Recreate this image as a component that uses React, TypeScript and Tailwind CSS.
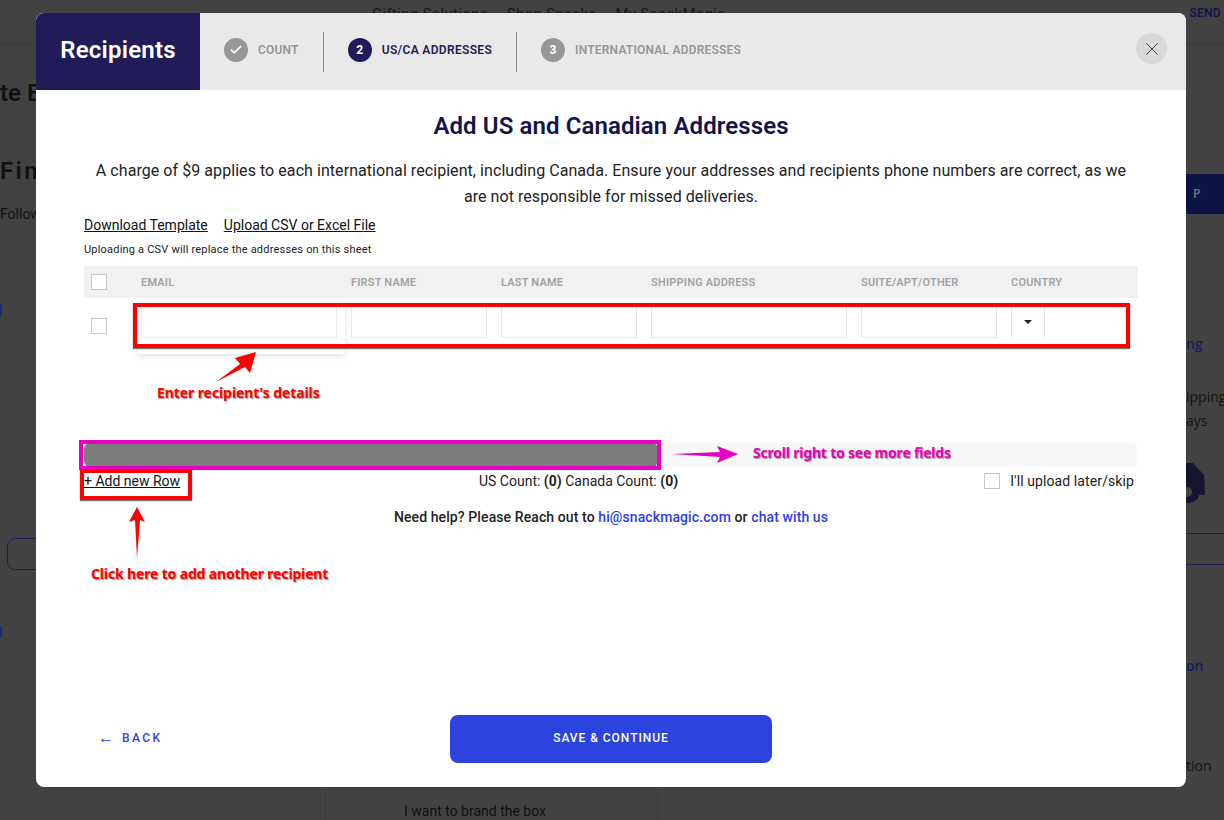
import React from 'react';
import { Check, X } from 'lucide-react';

const Box: React.FC<{ className?: string }> = ({ className = '' }) => (
  <span className={`block h-4 w-4 shrink-0 border border-[#c9c9c9] bg-white ${className}`} />
);

const columns = [
  { label: 'EMAIL', width: 'w-[196px]' },
  { label: 'FIRST NAME', width: 'w-[136px]' },
  { label: 'LAST NAME', width: 'w-[136px]' },
  { label: 'SHIPPING ADDRESS', width: 'w-[196px]' },
  { label: 'SUITE/APT/OTHER', width: 'w-[136px]' },
];

const Step: React.FC<{ mark: React.ReactNode; label: string; active?: boolean }> = ({ mark, label, active }) => (
  <div className="-mt-1 flex items-center gap-[10px]">
    <span
      className={`flex h-6 w-6 items-center justify-center rounded-full text-xs font-bold text-white ${
        active ? 'bg-[#211c57]' : 'bg-[#979797]'
      }`}
    >
      {mark}
    </span>
    <span
      className={`text-xs font-semibold ${
        active ? 'tracking-[0.33px] text-[#211c57]' : 'tracking-[0.2px] text-[#979797]'
      }`}
    >
      {label}
    </span>
  </div>
);

const App: React.FC = () => {
  return (
    <div className="relative h-[820px] w-[1224px] overflow-hidden bg-[#424242] font-['Roboto',sans-serif] text-[#111]">
      {/* Dimmed page behind the modal */}
      <div className="flex h-full flex-col">
        <div className="flex h-[45px] shrink-0 border-b border-[#3a3a3a] pl-[372px] pt-[3px] text-[15px] tracking-[0.3px] text-[#1b1b1b]">
          <span className="mr-[19px]">Gifting Solutions</span>
          <span className="mr-[19px]">Shop Snacks</span>
          <span>My SnackMagic ⌄</span>
          <span className="ml-auto pr-[3px] pt-[2px] text-xs font-semibold text-[#15154a]">SEND</span>
        </div>
        <div className="flex min-h-0 flex-1">
          <div className="w-9 shrink-0 overflow-hidden whitespace-nowrap text-[#111]">
            <div className="mt-[32px] text-2xl font-semibold">te E</div>
            <div className="mt-[46px] text-2xl font-semibold tracking-widest">Fin</div>
            <div className="mt-[17px] text-sm">Follow</div>
            <div className="-ml-[3px] mt-[80px] h-3 w-[5px] rounded-full bg-[#1d2a7a]" />
            <div className="ml-[7px] mt-[222px] h-8 w-10 rounded-l-lg border border-[#211c57]" />
            <div className="-ml-[3px] mt-[56px] h-3 w-[5px] rounded-full bg-[#1d2a7a]" />
          </div>
          <div className="flex flex-1 flex-col justify-end">
            <div className="ml-[286px] h-[33px] w-[341px] border-x border-[#484848] pl-[81px] pt-[14px] text-sm leading-5 text-[#111]">
              I want to brand the box
            </div>
          </div>
          <div className="w-[38px] shrink-0 overflow-hidden whitespace-nowrap font-['Open_Sans',sans-serif] text-sm text-[#141414]">
            <div className="mt-[129px] flex h-10 items-center bg-[#0c1446] pl-[7px] text-xs font-semibold text-[#777]">P</div>
            <div className="mt-[120px] text-sm font-semibold leading-5 text-[#16205f]">ng</div>
            <div className="mt-[33px] leading-5">ipping</div>
            <div className="mt-[4px] leading-5">ays</div>
            <svg className="mt-[30px] block" width="20" height="44" viewBox="0 0 20 44">
              <path d="M0 2 L7 2 L18 14 L19 34 L13 34 C12 40 5 43 0 42 L0 36 C3 36 6 34 6 31 C6 27 3 26 0 26 Z" fill="#15152e" />
            </svg>
            <div className="mt-[28px] h-[32px] border-y border-[#211c57]" />
            <div className="mt-[91px] text-sm font-semibold leading-5 text-[#16205f]">on</div>
            <div className="mt-[80px] leading-5">tion</div>
          </div>
        </div>
      </div>

      {/* Modal */}
      <div className="absolute left-9 top-[13px] flex h-[774px] w-[1150px] flex-col overflow-hidden rounded-lg bg-white">
        <div className="flex h-[77px] shrink-0 items-center bg-[#e9e9e9]">
          <div className="flex h-full w-[164px] items-center justify-center bg-[#211c57] pb-1 text-2xl font-semibold tracking-[0.2px] text-white">
            Recipients
          </div>
          <div className="ml-6">
            <Step mark={<Check size={14} strokeWidth={3} />} label="COUNT" />
          </div>
          <div className="ml-6 h-10 w-px bg-[#8d8d8d]" />
          <div className="ml-6">
            <Step mark="2" label="US/CA ADDRESSES" active />
          </div>
          <div className="ml-6 h-10 w-px bg-[#8d8d8d]" />
          <div className="ml-6">
            <Step mark="3" label="INTERNATIONAL ADDRESSES" />
          </div>
          <button className="ml-auto mr-[19px] -mt-[6px] flex h-[31px] w-[31px] items-center justify-center rounded-full bg-[#d9d9d9] text-[#333]">
            <X size={22} strokeWidth={1} />
          </button>
        </div>

        <div className="relative flex min-h-0 flex-1 flex-col px-12">
          <h1 className="mt-[21px] text-center text-2xl font-semibold leading-[30px] tracking-[0.1px] text-[#14144a]">
            Add US and Canadian Addresses
          </h1>
          <p className="mx-auto mt-[17px] w-[1040px] text-center text-base leading-[26px] tracking-[0.06px] text-[#222]">
            A charge of $9 applies to each international recipient, including Canada. Ensure your addresses and
            recipients phone numbers are correct, as we are not responsible for missed deliveries.
          </p>
          <div className="mt-[5px] flex gap-4 text-sm leading-5 text-[#111]">
            <a className="underline">Download Template</a>
            <a className="underline">Upload CSV or Excel File</a>
          </div>
          <div className="mt-[7px] text-[11px] leading-[16px] tracking-[0.2px] text-[#222]">
            Uploading a CSV will replace the addresses on this sheet
          </div>

          {/* Sheet */}
          <div className="mt-[8px] flex h-8 items-center bg-[#f1f1f1] pl-[7px]">
            <Box />
            <div className="ml-[34px] flex gap-[14px] pt-[2px]">
              {columns.map((c) => (
                <span key={c.label} className={`${c.width} text-[11px] font-semibold tracking-[0.2px] text-[#a3a3a3]`}>
                  {c.label}
                </span>
              ))}
              <span className="text-[11px] font-semibold tracking-[0.2px] text-[#a3a3a3]">COUNTRY</span>
            </div>
          </div>
          <div className="flex items-end pl-[7px]">
            <Box className="mb-[4px]" />
            <div className="ml-[34px] mt-[8px] flex gap-[14px]">
              {columns.map((c) => (
                <div key={c.label} className={`${c.width} h-8 border border-[#e8e8e8]`} />
              ))}
              <div className="flex h-8 w-[34px] items-center justify-center border-x border-[#e8e8e8]">
                <span className="h-0 w-0 border-x-4 border-t-4 border-x-transparent border-t-[#222]" />
              </div>
            </div>
          </div>

          {/* Scroll bar */}
          <div className="mt-[105px] h-6 rounded-md bg-[#f8f8f8]">
            <div className="h-full w-[574px] rounded-md bg-[#7d7d7d]" />
          </div>

          <div className="relative mt-[4px] flex h-[20px] items-center justify-between text-sm">
            <a className="underline text-[#111]">+ Add new Row</a>
            <span className="absolute left-[395px] text-[#222]">
              US Count: <b>(0)</b> Canada Count: <b>(0)</b>
            </span>
            <span className="flex items-center gap-[10px] pr-1 tracking-[0.1px] text-[#222]">
              <Box />
              I'll upload later/skip
            </span>
          </div>

          <p className="mt-[16px] text-center text-sm font-medium leading-5 tracking-[0.1px] text-[#222]">
            Need help? Please Reach out to <a className="text-[#2d43de]">hi@snackmagic.com</a> or{' '}
            <a className="text-[#2d43de]">chat with us</a>
          </p>

          <div className="mt-auto mb-6 flex items-center">
            <a className="-mt-[2px] ml-[14px] flex w-[66px] items-center gap-2 text-xs font-medium tracking-[0.2em] text-[#2d43de]">
              <span className="text-base leading-3 tracking-normal">←</span> BACK
            </a>
            <button className="ml-[286px] h-12 w-[322px] rounded-lg bg-[#2d43de] pb-[2px] text-xs font-medium tracking-[0.08em] text-white">
              SAVE &amp; CONTINUE
            </button>
          </div>

          {/* Annotations laid over the form (page x - 36, page y - 90) */}
          <div className="absolute left-[102px] top-[215px] h-[49px] w-[207px] shadow-[0_2px_6px_rgba(0,0,0,0.12)]" />
          <div className="absolute left-[97px] top-[213px] h-[45px] w-[997px] border-4 border-[#ff0000] shadow-[0_1px_1px_#777]" />
          <div className="absolute left-[43px] top-[350px] h-[30px] w-[582px] border-4 border-[#e600bf]" />
          <div className="absolute left-[44px] top-[379px] h-[31px] w-[112px] border-4 border-[#ff0000] shadow-[0_1px_1px_#777]" />
          <svg className="absolute left-[170px] top-[260px]" width="60" height="34" viewBox="0 0 60 34">
            <path d="M10 32 L34 14 L29 8 L50 2 L44 23 L39 17 Z" fill="#ff0000" />
          </svg>
          <svg className="absolute left-[90px] top-[414px]" width="22" height="56" viewBox="0 0 22 56">
            <path d="M11 3 L19 18 L14 16 L11 54 L9 16 L3 18 Z" fill="#ff0000" />
          </svg>
          <svg className="absolute left-[634px] top-[354px]" width="72" height="22" viewBox="0 0 72 22">
            <path d="M2 10 L50 8 L47 2 L68 10 L47 19 L50 13 Z" fill="#e600bf" />
          </svg>
          <span className="absolute left-[121px] top-[293px] font-['Noto_Sans',sans-serif] text-sm font-bold leading-5 tracking-[-0.09px] text-[#ff0000] [text-shadow:1px_1px_1px_#999]">
            Enter recipient's details
          </span>
          <span className="absolute left-[55px] top-[474px] font-['Noto_Sans',sans-serif] text-sm font-bold leading-5 tracking-[-0.15px] text-[#ff0000] [text-shadow:1px_1px_1px_#999]">
            Click here to add another recipient
          </span>
          <span className="absolute left-[717px] top-[353px] font-['Noto_Sans',sans-serif] text-sm font-bold leading-5 tracking-[-0.2px] text-[#e600bf] [text-shadow:1px_1px_1px_#999]">
            Scroll right to see more fields
          </span>
        </div>
      </div>
    </div>
  );
};

export default App;
